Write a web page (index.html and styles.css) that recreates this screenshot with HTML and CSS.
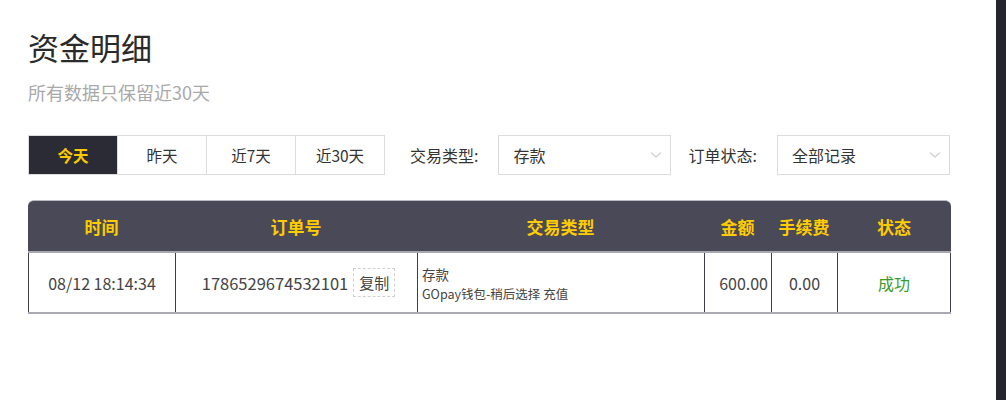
FILE: index.html
```html
<!DOCTYPE html>
<html lang="zh-CN">
<head>
<meta charset="utf-8">
<title>资金明细</title>
<link rel="stylesheet" href="styles.css">
</head>
<body>
<div class="page">
  <main class="main">
    <h1 class="title">资金明细</h1>
    <p class="subtitle">所有数据只保留近30天</p>
    <div class="toolbar">
      <div class="tabs">
        <div class="tab active">今天</div>
        <div class="tab">昨天</div>
        <div class="tab">近7天</div>
        <div class="tab">近30天</div>
      </div>
      <span class="label label-type">交易类型:</span>
      <div class="select">
        <span>存款</span>
        <svg class="chev" width="12" height="8" viewBox="0 0 12 8"><path d="M1 1.5 L6 6 L11 1.5" fill="none" stroke="#d4d4d4" stroke-width="1.6"/></svg>
      </div>
      <span class="label label-status">订单状态:</span>
      <div class="select">
        <span>全部记录</span>
        <svg class="chev" width="12" height="8" viewBox="0 0 12 8"><path d="M1 1.5 L6 6 L11 1.5" fill="none" stroke="#d4d4d4" stroke-width="1.6"/></svg>
      </div>
    </div>
    <div class="table">
      <div class="thead">
        <div class="th">时间</div>
        <div class="th">订单号</div>
        <div class="th">交易类型</div>
        <div class="th">金额</div>
        <div class="th">手续费</div>
        <div class="th">状态</div>
      </div>
      <div class="trow">
        <div class="td">08/12 18:14:34</div>
        <div class="td order"><span>1786529674532101</span><span class="copy">复制</span></div>
        <div class="td type"><span class="type-main">存款</span><span class="type-sub">GOpay钱包-稍后选择 充值</span></div>
        <div class="td amount">600.00</div>
        <div class="td">0.00</div>
        <div class="td status">成功</div>
      </div>
    </div>
  </main>
  <aside class="sidebar"></aside>
</div>
</body>
</html>
```
FILE: styles.css
```css
* { box-sizing: border-box; }
html, body { margin: 0; padding: 0; background: #fff; }
body {
  font-family: "Noto Sans CJK SC", "Noto Sans", sans-serif;
  color: #333;
}
.page {
  display: flex;
  width: 1006px;
  height: 400px;
}
.main {
  width: 996px;
  padding: 27px 0 0 28px;
}
.sidebar {
  width: 10px;
  background: #25252d;
}
.title {
  margin: 0;
  font-size: 31px;
  line-height: 40px;
  font-weight: 400;
  color: #2a2a2a;
}
.subtitle {
  margin: 13px 0 0;
  font-size: 18px;
  line-height: 24px;
  color: #a9a9a9;
}
.toolbar {
  margin-top: 31px;
  display: flex;
  align-items: center;
  height: 40px;
}
.tabs {
  display: flex;
  border: 1px solid #dcdcdc;
  height: 40px;
}
.tab {
  width: 89px;
  display: flex;
  align-items: center;
  justify-content: center;
  font-size: 15.5px;
  color: #333;
  border-left: 1px solid #dcdcdc;
}
.tab:first-child { border-left: none; width: 88px; }
.tab.active {
  background: #2b2b36;
  color: #f8c800;
  font-weight: 700;
}
.label {
  font-size: 16px;
  color: #333;
}
.label-type { margin: 0 20px 0 25px; }
.label-status { margin: 0 20px 0 17px; }
.select {
  width: 173px;
  height: 40px;
  border: 1px solid #dcdcdc;
  display: flex;
  align-items: center;
  justify-content: space-between;
  padding: 0 8px 0 14px;
  font-size: 16px;
  color: #333;
}
.table {
  margin-top: 25px;
  width: 923px;
}
.thead, .trow {
  display: grid;
  grid-template-columns: 147px 242px 287px 67px 66px 114px;
}
.thead {
  background: #4a4958;
  border-top: 1px solid #b9b9c1;
  border-radius: 6px 6px 0 0;
  height: 53px;
  border-bottom: 2px solid #a8a8b2;
}
.th {
  display: flex;
  align-items: center;
  justify-content: center;
  color: #ffcc00;
  font-size: 17px;
  font-weight: 700;
}
.trow {
  height: 61px;
  border-bottom: 2px solid #a9a9b3;
}
.td {
  display: flex;
  align-items: center;
  justify-content: center;
  font-size: 16px;
  color: #444;
  border-left: 1px solid #3e3e4a;
}
.td:last-child { border-right: 1px solid #3e3e4a; }
.order { gap: 5px; font-size: 16.5px; padding-left: 4px; }
.copy {
  border: 1px dashed #d0d0d0;
  padding: 3px 5px;
  font-size: 15px;
  line-height: 21px;
  color: #444;
}
.type {
  flex-direction: column;
  align-items: flex-start;
  justify-content: center;
  padding-left: 4px;
  padding-top: 2px;
}
.type-main { font-size: 13.5px; line-height: 20px; }
.type-sub { font-size: 12.5px; line-height: 19px; }
.amount { justify-content: flex-end; padding-right: 3px; }
.status { color: #3a9a2a; }
```
